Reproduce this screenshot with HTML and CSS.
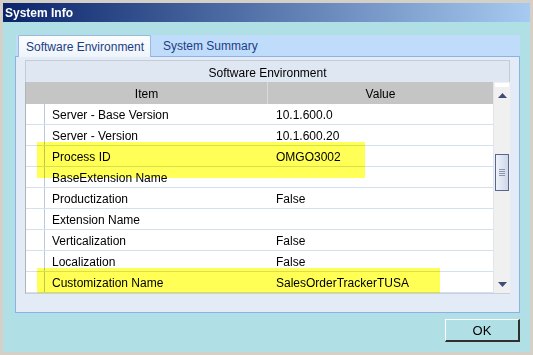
FILE: index.html
```html
<!DOCTYPE html>
<html>
<head>
<meta charset="utf-8">
<link rel="stylesheet" href="styles.css">
</head>
<body>
<div class="window">
  <div class="titlebar">System Info</div>
  <div class="client">
    <div class="tabs">
      <div class="tabstrip">
        <div class="tab active">Software Environment</div>
        <div class="tab">System Summary</div>
      </div>
      <div class="panel">
        <div class="grid">
          <div class="caption">Software Environment</div>
          <div class="gridbody">
            <div class="table">
              <div class="hrow">
                <div class="hcell h1">Item</div>
                <div class="hcell h2">Value</div>
              </div>
              <div class="row"><div class="rh"></div><div class="c1">Server - Base Version</div><div class="c2">10.1.600.0</div></div>
              <div class="row"><div class="rh"></div><div class="c1">Server - Version</div><div class="c2">10.1.600.20</div></div>
              <div class="row"><div class="rh"></div><div class="c1">Process ID</div><div class="c2">OMGO3002</div></div>
              <div class="row"><div class="rh"></div><div class="c1">BaseExtension Name</div><div class="c2"></div></div>
              <div class="row"><div class="rh"></div><div class="c1">Productization</div><div class="c2">False</div></div>
              <div class="row"><div class="rh"></div><div class="c1">Extension Name</div><div class="c2"></div></div>
              <div class="row"><div class="rh"></div><div class="c1">Verticalization</div><div class="c2">False</div></div>
              <div class="row"><div class="rh"></div><div class="c1">Localization</div><div class="c2">False</div></div>
              <div class="row"><div class="rh"></div><div class="c1">Customization Name</div><div class="c2">SalesOrderTrackerTUSA</div></div>
            </div>
            <div class="scrollbar">
              <div class="sb-top"></div>
              <div class="sb-btn"><svg width="9" height="5" viewBox="0 0 9 5"><path d="M0 5 L4.5 0 L9 5 Z" fill="#3d4d75"/></svg></div>
              <div class="sb-track">
                <div class="thumb"><span></span><span></span><span></span><span></span></div>
              </div>
              <div class="sb-btn"><svg width="9" height="5" viewBox="0 0 9 5"><path d="M0 0 L9 0 L4.5 5 Z" fill="#3d4d75"/></svg></div>
            </div>
            <div class="hl hl1"></div>
            <div class="hl hl2"></div>
          </div>
        </div>
      </div>
    </div>
    <div class="footer">
      <div class="ok">OK</div>
    </div>
  </div>
</div>
</body>
</html>
```
FILE: styles.css
```css
html, body {
  margin: 0;
  padding: 0;
  background: #d4d0c8;
}
.window {
  width: 533px;
  height: 355px;
  box-sizing: border-box;
  border: 3px solid #d4d0c8;
  box-shadow: inset -1px -1px 0 #404040, inset 1px 1px 0 #ffffff;
  display: flex;
  flex-direction: column;
  font-family: "Liberation Sans", Arial, sans-serif;
  font-size: 12px;
  color: #000;
}
.titlebar {
  height: 19px;
  line-height: 20px;
  padding-left: 2px;
  background: linear-gradient(to right, #0a246a, #a6caf0);
  color: #fff;
  font-weight: bold;
  font-size: 12px;
}
.client {
  flex: 1;
  background: #b0e0e6;
  display: flex;
  flex-direction: column;
  padding: 13px 10px 0 12px;
}
.tabs {
  width: 505px;
  display: flex;
  flex-direction: column;
}
.tabstrip {
  height: 21px;
  background: #bfdcfb;
  display: flex;
  align-items: flex-end;
  padding-left: 2px;
  margin-left: 1px;
  position: relative;
  z-index: 1;
}
.tab {
  height: 21px;
  line-height: 22px;
  color: #1e3c84;
  padding: 0 12px 0 12px;
  white-space: nowrap;
}
.tab.active {
  height: 22px;
  margin-bottom: -1px;
  box-sizing: border-box;
  width: 133px;
  padding: 0 0 0 7px;
  line-height: 22px;
  background: linear-gradient(#fbfdff, #eef4fb);
  border: 1px solid #9cb8dc;
  border-bottom: none;
  border-radius: 2px 2px 0 0;
}
.panel {
  height: 257px;
  box-sizing: border-box;
  border: 1px solid #8eb0e6;
  background: #e3ebf7;
  padding: 3px 9px 0 9px;
}
.grid {
  width: 485px;
  display: flex;
  flex-direction: column;
}
.caption {
  height: 22px;
  box-sizing: border-box;
  padding-top: 2px;
  line-height: 20px;
  text-align: center;
  background: #dfe7f2;
  border: 1px solid #c6ccd6;
  border-bottom: none;
}
.gridbody {
  display: flex;
  position: relative;
  border-left: 1px solid #b4b4b4;
  border-bottom: 1px solid #c8d0dc;
}
.table {
  width: 467px;
  background: #fff;
}
.hrow {
  display: flex;
  height: 22px;
  background: #c5c5c5;
}
.hcell {
  padding-top: 2px;
  line-height: 20px;
  text-align: center;
  box-sizing: border-box;
}
.h1 {
  width: 242px;
  border-right: 1px solid #dadada;
}
.h2 {
  width: 225px;
}
.row {
  display: flex;
  height: 21px;
  box-sizing: border-box;
  border-bottom: 1px solid #d5e0ef;
}
.rh {
  width: 18px;
  border-right: 1px solid #b9c9df;
  box-sizing: content-box;
}
.c1 {
  width: 217px;
  padding-left: 7px;
  padding-top: 2px;
  line-height: 18px;
}
.c2 {
  flex: 1;
  padding-left: 7px;
  padding-top: 2px;
  line-height: 18px;
}
.scrollbar {
  width: 17px;
  background: #f0f0f0;
  border-left: 1px solid #e2e6ec;
  box-sizing: border-box;
  display: flex;
  flex-direction: column;
  align-items: center;
}
.sb-top {
  height: 4px;
  width: 14px;
  margin-top: 1px;
  background: #fff;
}
.sb-btn {
  height: 17px;
  width: 16px;
  display: flex;
  align-items: center;
  justify-content: center;
}
.sb-track {
  flex: 1;
  width: 16px;
  padding-top: 50px;
  display: flex;
  flex-direction: column;
  align-items: center;
}
.thumb {
  width: 14px;
  height: 37px;
  box-sizing: border-box;
  border: 1px solid #56688f;
  background: linear-gradient(to right, #eef2fa, #cfd8ea);
  display: flex;
  flex-direction: column;
  align-items: center;
  justify-content: center;
  gap: 1px;
}
.thumb span {
  display: block;
  width: 6px;
  height: 1px;
  background: #8a96ac;
}
.hl {
  position: absolute;
  background: #ffff55;
  mix-blend-mode: multiply;
}
.hl1 {
  left: 11px;
  top: 60px;
  width: 328px;
  height: 36px;
}
.hl2 {
  left: 11px;
  top: 186px;
  width: 403px;
  height: 25px;
}
.footer {
  display: flex;
  justify-content: flex-end;
  padding-top: 6px;
}
.ok {
  width: 75px;
  height: 23px;
  box-sizing: border-box;
  border-top: 1px solid #ffffff;
  border-left: 1px solid #ffffff;
  border-right: 2px solid #303030;
  border-bottom: 2px solid #303030;
  text-align: center;
  line-height: 22px;
  background: #b0e0e6;
  font-size: 13px;
}
```
